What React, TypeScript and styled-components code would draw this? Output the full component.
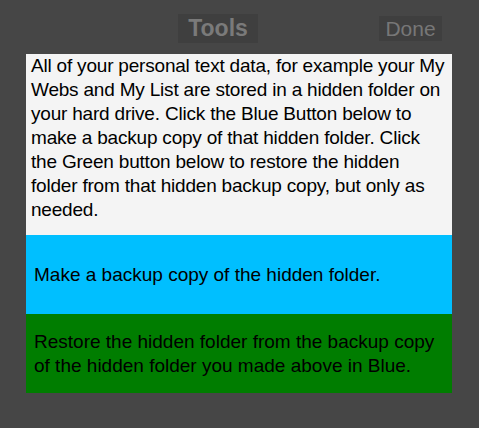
import React from "react";
import styled, { createGlobalStyle } from "styled-components";

const Global = createGlobalStyle`
  html, body { margin: 0; padding: 0; background: #464646; }
  body { font-family: "Liberation Sans", Arial, sans-serif; }
`;

const Page = styled.div`
  width: 479px;
  height: 428px;
  background: #464646;
  display: flex;
  flex-direction: column;
`;

const Header = styled.div`
  height: 54px;
  display: flex;
  align-items: flex-start;
  padding: 0 37px 0 178px;
  box-sizing: border-box;
`;

const Title = styled.div`
  margin-top: 14px;
  width: 80px;
  height: 29px;
  background: #3f3f3f;
  color: #7a7a7a;
  font-weight: bold;
  font-size: 23px;
  line-height: 29px;
  text-align: center;
`;

const DoneButton = styled.div`
  margin-top: 16px;
  margin-left: auto;
  width: 63px;
  height: 25px;
  background: #3f3f3f;
  color: #777777;
  font-size: 21px;
  line-height: 26px;
  text-align: center;
`;

const Panel = styled.div`
  margin-left: 26px;
  width: 426px;
  display: flex;
  flex-direction: column;
`;

const Intro = styled.div`
  background: #f4f4f4;
  color: #000;
  font-size: 19px;
  letter-spacing: -0.2px;
  line-height: 24px;
  padding: 0 4px 13px 5px;
  height: 181px;
  box-sizing: border-box;
`;

const ActionBlock = styled.div<{ $bg: string }>`
  background: ${(p) => p.$bg};
  height: 79px;
  display: flex;
  align-items: center;
  padding: 0 4px 0 8px;
  color: #000;
  font-size: 19px;
  line-height: 23.5px;
  box-sizing: border-box;
`;

export default function App() {
  return (
    <Page>
      <Global />
      <Header>
        <Title>Tools</Title>
        <DoneButton>Done</DoneButton>
      </Header>
      <Panel>
        <Intro>
          All of your personal text data, for example your My Webs and My List are stored in a hidden folder on your hard drive. Click the Blue Button below to make a backup copy of that hidden folder. Click the Green button below to restore the hidden folder from that hidden backup copy, but only as needed.
        </Intro>
        <ActionBlock $bg="#00bfff">Make a backup copy of the hidden folder.</ActionBlock>
        <ActionBlock $bg="#007d00">
          Restore the hidden folder from the backup copy of the hidden folder you made above in Blue.
        </ActionBlock>
      </Panel>
    </Page>
  );
}
